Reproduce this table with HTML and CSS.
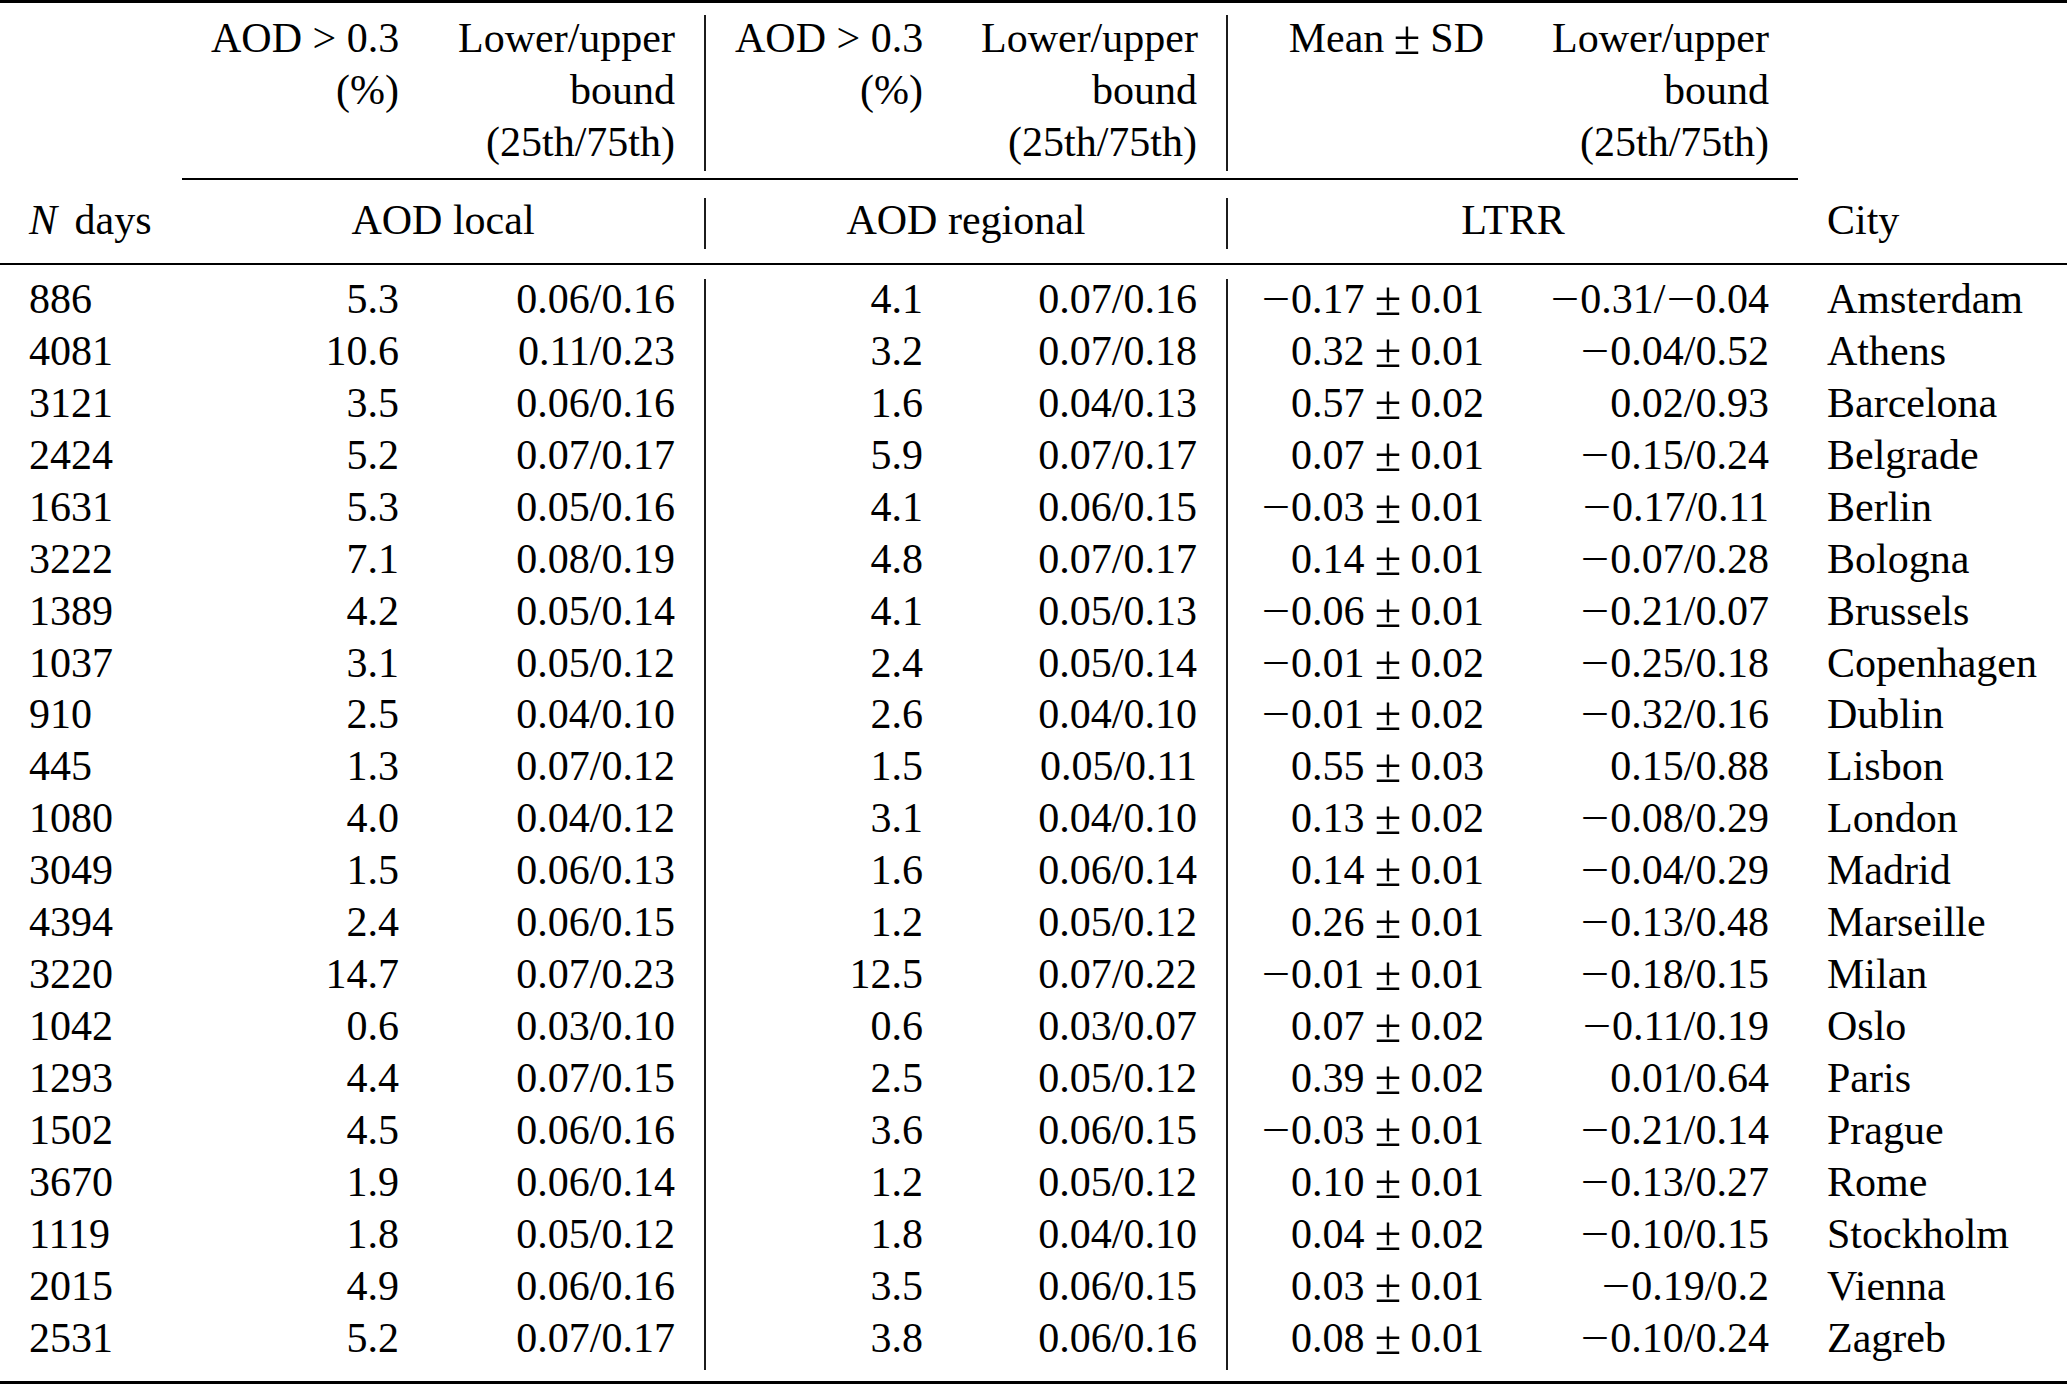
FILE: index.html
```html
<!DOCTYPE html>
<html lang="en">
<head>
<meta charset="utf-8">
<title>AOD and LTRR by city</title>
<link rel="stylesheet" href="styles.css">
</head>
<body>
<table class="t">
  <colgroup>
    <col class="w1"><col class="w2"><col class="w3"><col class="w4"><col class="w5"><col class="w6"><col class="w7"><col class="w8">
  </colgroup>
  <tbody>
    <tr class="rule top"><td colspan="8"></td></tr>
    <tr class="gap g1"><td colspan="8"></td></tr>
    <tr class="h1">
      <td></td>
      <td class="r"><div class="stack">AOD &gt; 0.3<br>(%)</div></td>
      <td class="r vr"><div class="stack">Lower/upper<br>bound<br>(25th/75th)</div></td>
      <td class="r"><div class="stack">AOD &gt; 0.3<br>(%)</div></td>
      <td class="r vr"><div class="stack">Lower/upper<br>bound<br>(25th/75th)</div></td>
      <td class="r"><div class="stack">Mean<span class="pm">±</span>SD</div></td>
      <td class="r"><div class="stack">Lower/upper<br>bound<br>(25th/75th)</div></td>
      <td></td>
    </tr>
    <tr class="gap g2"><td colspan="8"></td></tr>
    <tr class="rule cmid"><td class="blank"></td><td colspan="6" class="ink"></td><td class="blank"></td></tr>
    <tr class="gap g3"><td colspan="8"></td></tr>
    <tr class="h2">
      <td class="l"><i class="var">N</i> days</td>
      <td colspan="2" class="c vr">AOD local</td>
      <td colspan="2" class="c vr">AOD regional</td>
      <td colspan="2" class="c">LTRR</td>
      <td class="l">City</td>
    </tr>
    <tr class="gap g4"><td colspan="8"></td></tr>
    <tr class="rule mid"><td colspan="8"></td></tr>
    <tr class="gap g5"><td colspan="8"></td></tr>

    <tr class="d"><td>886</td><td class="r">5.3</td><td class="r vr">0.06/0.16</td><td class="r">4.1</td><td class="r vr">0.07/0.16</td><td class="r"><span class="m">−</span>0.17<span class="pm">±</span>0.01</td><td class="r"><span class="m">−</span>0.31/<span class="m">−</span>0.04</td><td>Amsterdam</td></tr>
    <tr class="d"><td>4081</td><td class="r">10.6</td><td class="r vr">0.11/0.23</td><td class="r">3.2</td><td class="r vr">0.07/0.18</td><td class="r">0.32<span class="pm">±</span>0.01</td><td class="r"><span class="m">−</span>0.04/0.52</td><td>Athens</td></tr>
    <tr class="d"><td>3121</td><td class="r">3.5</td><td class="r vr">0.06/0.16</td><td class="r">1.6</td><td class="r vr">0.04/0.13</td><td class="r">0.57<span class="pm">±</span>0.02</td><td class="r">0.02/0.93</td><td>Barcelona</td></tr>
    <tr class="d"><td>2424</td><td class="r">5.2</td><td class="r vr">0.07/0.17</td><td class="r">5.9</td><td class="r vr">0.07/0.17</td><td class="r">0.07<span class="pm">±</span>0.01</td><td class="r"><span class="m">−</span>0.15/0.24</td><td>Belgrade</td></tr>
    <tr class="d"><td>1631</td><td class="r">5.3</td><td class="r vr">0.05/0.16</td><td class="r">4.1</td><td class="r vr">0.06/0.15</td><td class="r"><span class="m">−</span>0.03<span class="pm">±</span>0.01</td><td class="r"><span class="m">−</span>0.17/0.11</td><td>Berlin</td></tr>
    <tr class="d"><td>3222</td><td class="r">7.1</td><td class="r vr">0.08/0.19</td><td class="r">4.8</td><td class="r vr">0.07/0.17</td><td class="r">0.14<span class="pm">±</span>0.01</td><td class="r"><span class="m">−</span>0.07/0.28</td><td>Bologna</td></tr>
    <tr class="d"><td>1389</td><td class="r">4.2</td><td class="r vr">0.05/0.14</td><td class="r">4.1</td><td class="r vr">0.05/0.13</td><td class="r"><span class="m">−</span>0.06<span class="pm">±</span>0.01</td><td class="r"><span class="m">−</span>0.21/0.07</td><td>Brussels</td></tr>
    <tr class="d"><td>1037</td><td class="r">3.1</td><td class="r vr">0.05/0.12</td><td class="r">2.4</td><td class="r vr">0.05/0.14</td><td class="r"><span class="m">−</span>0.01<span class="pm">±</span>0.02</td><td class="r"><span class="m">−</span>0.25/0.18</td><td>Copenhagen</td></tr>
    <tr class="d"><td>910</td><td class="r">2.5</td><td class="r vr">0.04/0.10</td><td class="r">2.6</td><td class="r vr">0.04/0.10</td><td class="r"><span class="m">−</span>0.01<span class="pm">±</span>0.02</td><td class="r"><span class="m">−</span>0.32/0.16</td><td>Dublin</td></tr>
    <tr class="d"><td>445</td><td class="r">1.3</td><td class="r vr">0.07/0.12</td><td class="r">1.5</td><td class="r vr">0.05/0.11</td><td class="r">0.55<span class="pm">±</span>0.03</td><td class="r">0.15/0.88</td><td>Lisbon</td></tr>
    <tr class="d"><td>1080</td><td class="r">4.0</td><td class="r vr">0.04/0.12</td><td class="r">3.1</td><td class="r vr">0.04/0.10</td><td class="r">0.13<span class="pm">±</span>0.02</td><td class="r"><span class="m">−</span>0.08/0.29</td><td>London</td></tr>
    <tr class="d"><td>3049</td><td class="r">1.5</td><td class="r vr">0.06/0.13</td><td class="r">1.6</td><td class="r vr">0.06/0.14</td><td class="r">0.14<span class="pm">±</span>0.01</td><td class="r"><span class="m">−</span>0.04/0.29</td><td>Madrid</td></tr>
    <tr class="d"><td>4394</td><td class="r">2.4</td><td class="r vr">0.06/0.15</td><td class="r">1.2</td><td class="r vr">0.05/0.12</td><td class="r">0.26<span class="pm">±</span>0.01</td><td class="r"><span class="m">−</span>0.13/0.48</td><td>Marseille</td></tr>
    <tr class="d"><td>3220</td><td class="r">14.7</td><td class="r vr">0.07/0.23</td><td class="r">12.5</td><td class="r vr">0.07/0.22</td><td class="r"><span class="m">−</span>0.01<span class="pm">±</span>0.01</td><td class="r"><span class="m">−</span>0.18/0.15</td><td>Milan</td></tr>
    <tr class="d"><td>1042</td><td class="r">0.6</td><td class="r vr">0.03/0.10</td><td class="r">0.6</td><td class="r vr">0.03/0.07</td><td class="r">0.07<span class="pm">±</span>0.02</td><td class="r"><span class="m">−</span>0.11/0.19</td><td>Oslo</td></tr>
    <tr class="d"><td>1293</td><td class="r">4.4</td><td class="r vr">0.07/0.15</td><td class="r">2.5</td><td class="r vr">0.05/0.12</td><td class="r">0.39<span class="pm">±</span>0.02</td><td class="r">0.01/0.64</td><td>Paris</td></tr>
    <tr class="d"><td>1502</td><td class="r">4.5</td><td class="r vr">0.06/0.16</td><td class="r">3.6</td><td class="r vr">0.06/0.15</td><td class="r"><span class="m">−</span>0.03<span class="pm">±</span>0.01</td><td class="r"><span class="m">−</span>0.21/0.14</td><td>Prague</td></tr>
    <tr class="d"><td>3670</td><td class="r">1.9</td><td class="r vr">0.06/0.14</td><td class="r">1.2</td><td class="r vr">0.05/0.12</td><td class="r">0.10<span class="pm">±</span>0.01</td><td class="r"><span class="m">−</span>0.13/0.27</td><td>Rome</td></tr>
    <tr class="d"><td>1119</td><td class="r">1.8</td><td class="r vr">0.05/0.12</td><td class="r">1.8</td><td class="r vr">0.04/0.10</td><td class="r">0.04<span class="pm">±</span>0.02</td><td class="r"><span class="m">−</span>0.10/0.15</td><td>Stockholm</td></tr>
    <tr class="d"><td>2015</td><td class="r">4.9</td><td class="r vr">0.06/0.16</td><td class="r">3.5</td><td class="r vr">0.06/0.15</td><td class="r">0.03<span class="pm">±</span>0.01</td><td class="r"><span class="m">−</span>0.19/0.2</td><td>Vienna</td></tr>
    <tr class="d"><td>2531</td><td class="r">5.2</td><td class="r vr">0.07/0.17</td><td class="r">3.8</td><td class="r vr">0.06/0.16</td><td class="r">0.08<span class="pm">±</span>0.01</td><td class="r"><span class="m">−</span>0.10/0.24</td><td>Zagreb</td></tr>

    <tr class="gap g6"><td colspan="8"></td></tr>
    <tr class="rule bottom"><td colspan="8"></td></tr>
  </tbody>
</table>
</body>
</html>
```

FILE: styles.css
```css
html, body {
  margin: 0;
  padding: 0;
  background: #ffffff;
}

body {
  color: #000000;
  font-family: "Liberation Serif", "Times New Roman", serif;
  font-size: 42px;
  overflow: hidden;
}

.t {
  width: 2067px;
  border-collapse: collapse;
  border-spacing: 0;
  table-layout: fixed;
}

.w1 { width: 182px; }
.w2 { width: 246px; }
.w3 { width: 277px; }
.w4 { width: 247px; }
.w5 { width: 275px; }
.w6 { width: 286px; }
.w7 { width: 285px; }
.w8 { width: 269px; }

.t td {
  padding: 0 29px;
  vertical-align: top;
  white-space: nowrap;
  text-align: left;
}

.t .r { text-align: right; }
.t .l { text-align: left; }
.t .c { text-align: center; }

.t .vr {
  border-right: 2px solid #1c1c1c;
}

/* rules and spacer rows */
.rule td,
.gap td {
  padding: 0;
  font-size: 0;
  line-height: 0;
}

.rule.top td,
.rule.mid td,
.rule.bottom td,
.rule.cmid td.ink {
  background: #000000;
}

.rule.top { height: 2.6px; }
.gap.g1 { height: 12.4px; }
.h1 { height: 156px; }
.gap.g2 { height: 7px; }
.rule.cmid { height: 1.7px; }
.gap.g3 { height: 18.3px; }
.h2 { height: 51px; }
.gap.g4 { height: 14px; }
.rule.mid { height: 1.8px; }
.gap.g5 { height: 14.2px; }
.d { height: 51.94px; }
.gap.g6 { height: 11.8px; }
.rule.bottom { height: 3px; }

/* header rows */
.h1 td {
  line-height: 52px;
}

.stack {
  margin-top: -3px;
}

.h2 td {
  line-height: 44px;
}

.var {
  margin-right: 7px;
}

/* data rows */
.d td {
  line-height: 40px;
}

/* math minus: wider than the text-font glyph */
.m {
  display: inline-block;
  width: 30px;
  text-align: center;
  transform: scaleX(1.2);
}

/* plus-minus with math spacing on both sides */
.pm {
  display: inline-block;
  width: 46px;
  text-align: center;
  transform: scale(1.15);
}
```
